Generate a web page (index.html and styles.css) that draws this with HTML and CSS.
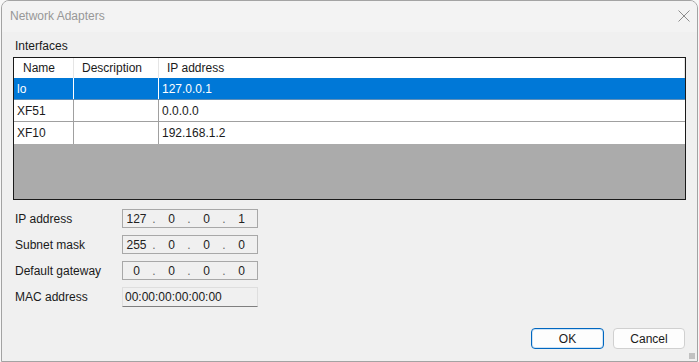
FILE: index.html
```html
<!DOCTYPE html>
<html lang="en">
<head>
    <meta charset="UTF-8">
    <title>Network Adapters</title>
    <link rel="stylesheet" href="styles.css">
</head>
<body>

    <div class="window">
        <!-- Title bar -->
        <div class="titlebar">
            <span class="title">Network Adapters</span>
            <svg class="close" width="12" height="12" viewBox="0 0 12 12">
                <path d="M0.5 0.5 L11.5 11.5 M11.5 0.5 L0.5 11.5" stroke="#8c8c8c" stroke-width="1" fill="none"/>
            </svg>
        </div>

        <div class="content">
            <div class="group-label">Interfaces</div>

            <!-- Interface list -->
            <div class="list">
                <div class="list-row header">
                    <div class="cell">Name</div>
                    <div class="cell">Description</div>
                    <div class="cell">IP address</div>
                </div>
                <div class="list-row selected">
                    <div class="cell">lo</div>
                    <div class="cell"></div>
                    <div class="cell">127.0.0.1</div>
                </div>
                <div class="list-row">
                    <div class="cell">XF51</div>
                    <div class="cell"></div>
                    <div class="cell">0.0.0.0</div>
                </div>
                <div class="list-row">
                    <div class="cell">XF10</div>
                    <div class="cell"></div>
                    <div class="cell">192.168.1.2</div>
                </div>
                <div class="list-empty"></div>
            </div>

            <!-- Address fields -->
            <div class="fields">
                <label>IP address</label>
                <div class="ipbox">
                    <span class="oct">127</span><span class="dot">.</span><span class="oct">0</span><span class="dot">.</span><span class="oct">0</span><span class="dot">.</span><span class="oct">1</span>
                </div>

                <label>Subnet mask</label>
                <div class="ipbox">
                    <span class="oct">255</span><span class="dot">.</span><span class="oct">0</span><span class="dot">.</span><span class="oct">0</span><span class="dot">.</span><span class="oct">0</span>
                </div>

                <label>Default gateway</label>
                <div class="ipbox">
                    <span class="oct">0</span><span class="dot">.</span><span class="oct">0</span><span class="dot">.</span><span class="oct">0</span><span class="dot">.</span><span class="oct">0</span>
                </div>

                <label>MAC address</label>
                <div class="macbox">00:00:00:00:00:00</div>
            </div>

            <div class="buttons">
                <button class="default">OK</button>
                <button>Cancel</button>
            </div>
        </div>

        <div class="grip"></div>
    </div>

</body>
</html>
```

FILE: styles.css
```css
body {
    margin: 0;
    padding: 0 1px;
    background-color: #f7f7f7;
    font-family: "Liberation Sans", Arial, sans-serif;
    font-size: 12px;
    color: #1a1a1a;
}

.window {
    position: relative;
    box-sizing: border-box;
    width: 697px;
    height: 362px;
    border: 1px solid #a3a3a3;
    border-radius: 8px 8px 0 0;
    background-color: #f0f0f0;
    overflow: hidden;
}

/* Title bar */
.titlebar {
    display: flex;
    align-items: center;
    justify-content: space-between;
    height: 31px;
    padding: 0 7px 0 8px;
    background-color: #f3f3f3;
}

.title {
    color: #979797;
    font-size: 12px;
    margin-top: -1px;
}

.close {
    margin-top: -1px;
}

.content {
    padding: 7px 10px 0 11px;
}

.group-label {
    line-height: 15px;
    margin-bottom: 3px;
    padding-left: 2px;
}

/* List view */
.list {
    box-sizing: border-box;
    width: 673px;
    height: 143px;
    border: 1px solid #1a1a1a;
    background-color: #ababab;
    display: flex;
    flex-direction: column;
}

.list-row {
    display: grid;
    grid-template-columns: 60px 85px 1fr;
    height: 22px;
    background-color: #ffffff;
    border-bottom: 1px solid #a0a0a0;
    box-sizing: border-box;
}

.list-row .cell {
    display: flex;
    align-items: center;
    padding-left: 3px;
    border-right: 1px solid #a0a0a0;
    white-space: nowrap;
}

.list-row .cell:last-child {
    border-right: none;
}

.list-row.header {
    height: 20px;
    border-bottom: none;
}

.list-row.header .cell {
    padding-left: 8px;
    border-right: 1px solid #e5e5e5;
}

.list-row.header .cell:first-child {
    padding-left: 9px;
}

.list-row.selected {
    background-color: #0078d7;
    color: #ffffff;
    border-bottom: 1px solid #5f8fb8;
}

.list-row.selected .cell {
    border-right-color: #ffffff;
}

.list-row:nth-child(4) {
    border-bottom: none;
}

.list-empty {
    flex: 1;
}

/* Address fields */
.fields {
    display: grid;
    grid-template-columns: 107px 136px;
    row-gap: 7px;
    margin: 9px 0 0 2px;
}

.fields label {
    display: flex;
    align-items: center;
}

.ipbox {
    box-sizing: border-box;
    height: 19px;
    border: 1px solid #a8a8a8;
    display: flex;
    align-items: center;
    color: #222222;
}

.ipbox .oct {
    width: 27px;
    text-align: center;
}

.ipbox .dot {
    width: 8px;
    text-align: center;
    color: #666666;
}

.macbox {
    box-sizing: border-box;
    height: 20px;
    border: 1px solid #dedede;
    border-bottom: 1px solid #7f7f7f;
    padding-left: 2px;
    display: flex;
    align-items: center;
}

/* Dialog buttons */
.buttons {
    display: flex;
    justify-content: flex-end;
    gap: 9px;
    margin-top: 21px;
    padding-right: 2px;
}

button {
    box-sizing: border-box;
    width: 72px;
    height: 21px;
    padding: 0;
    font-family: inherit;
    font-size: 12px;
    color: #1a1a1a;
    background-color: #fdfdfd;
    border: 1px solid #d0d0d0;
    border-radius: 4px;
}

button.default {
    width: 73px;
    border: 1px solid #0067c0;
    box-shadow: inset 0 0 0 1px #cfe3f5;
}

.grip {
    position: absolute;
    right: 2px;
    bottom: 2px;
    width: 6px;
    height: 6px;
    background-image: radial-gradient(#b5b5b5 0.8px, transparent 1px);
    background-size: 2px 2px;
    opacity: 0.8;
}
```
